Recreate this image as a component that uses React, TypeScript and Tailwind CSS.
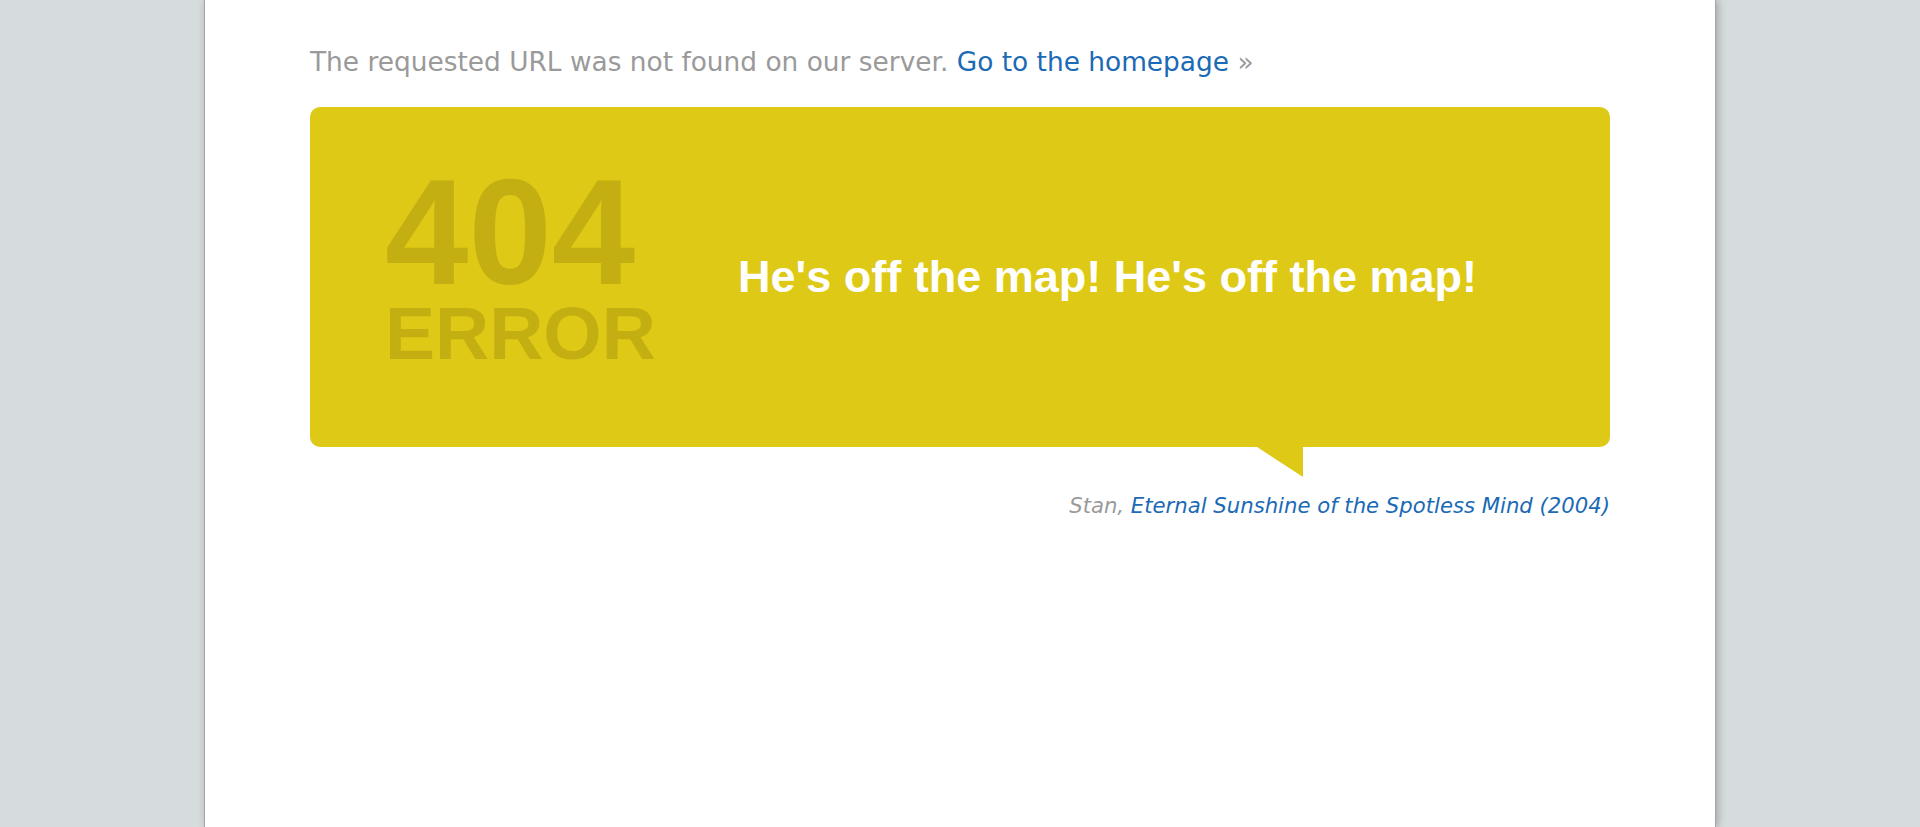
import React from 'react'

const NotFoundPage: React.FC = () => {
  return (
    <div className="min-h-screen bg-[#d6dbde]">
      <div className="mx-auto min-h-screen w-[1512px] border-x border-[#a3a7aa] bg-white px-[105px] pt-[44px] shadow-[2px_0_8px_rgba(0,0,0,0.25)]">
        <p className="font-['DejaVu_Sans',sans-serif] text-[26.4px] leading-[36px] text-[#9a9a9a]">
          The requested URL was not found on our server.{' '}
          <a href="#" className="text-[#1b6ab5]">
            Go to the homepage
          </a>{' '}
          »
        </p>

        <div className="relative mt-[27px] flex h-[340px] w-[1300px] items-center rounded-[10px] bg-[#dec916] pl-[75px] font-['Liberation_Sans',Arial,sans-serif] font-bold">
          <div className="mb-[15px] w-[353px] shrink-0 text-[#c4af12]">
            <div className="text-[150px] leading-[128px]">404</div>
            <div className="text-[75px] leading-[75px]">ERROR</div>
          </div>
          <div className="text-[45px] leading-[52px] text-white">He's off the map! He's off the map!</div>

          <svg
            className="absolute left-[947px] top-[340px]"
            width="46"
            height="30"
            viewBox="0 0 46 30"
          >
            <polygon points="0,0 46,0 46,30" fill="#dec916" />
          </svg>
        </div>

        <p className="mt-[46px] w-[1300px] text-right font-['DejaVu_Sans',sans-serif] text-[21.2px] italic leading-[25px] text-[#9a9a9a]">
          Stan,{' '}
          <a href="#" className="text-[#1b6ab5]">
            Eternal Sunshine of the Spotless Mind (2004)
          </a>
        </p>
      </div>
    </div>
  )
}

export default function App() {
  return <NotFoundPage />
}
